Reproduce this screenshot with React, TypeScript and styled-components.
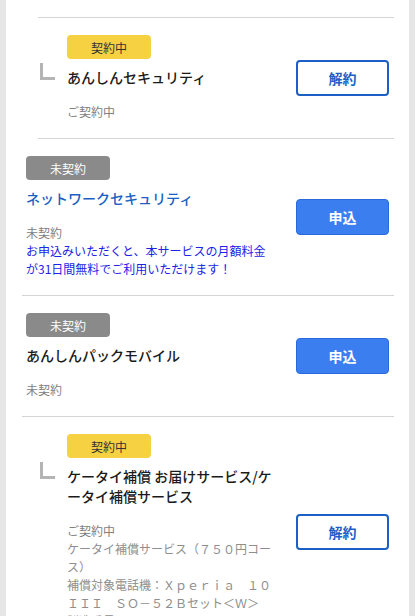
import React from "react";
import styled, {createGlobalStyle} from "styled-components";

const GlobalStyle = createGlobalStyle`
  body {
    margin: 0;
    background: #e6e6e6;
    font-family: "Noto Sans CJK JP", "Noto Sans", sans-serif;
    color: #222;
  }
`

const Page = styled.div`
  padding: 0 6px;
  height: 616px;
  overflow: hidden;
`

const Card = styled.div`
  background: #fff;
  padding: 0 15px 0 16px;
  min-height: 616px;
`

const TopEdge = styled.div`
  height: 17px;
  margin-left: 16px;
  border-bottom: 1px solid #d4d4d4;
`

const Row = styled.div<{ $indent: boolean }>`
  display: flex;
  align-items: center;
  margin-left: ${({$indent}) => $indent ? "16px" : "0"};
  padding: 17px 5px 17px ${({$indent}) => $indent ? "29px" : "4px"};
  border-bottom: 1px solid #d4d4d4;
`

const Body = styled.div`
  flex: 1;
  min-width: 0;
  margin-right: 21px;
`

const Badge = styled.div<{ $active: boolean }>`
  width: 84px;
  height: 24px;
  border-radius: 4px;
  display: flex;
  align-items: center;
  justify-content: center;
  font-size: 12px;
  background: ${({$active}) => $active ? "#f6d243" : "#8a8a8a"};
  color: ${({$active}) => $active ? "#333" : "#fff"};
`

const TitleLine = styled.div`
  display: flex;
  align-items: flex-start;
  margin-top: 8px;
`

const Corner = styled.span`
  flex: none;
  width: 12px;
  height: 14px;
  margin: -4px 12px 0 -27px;
  border-left: 3px solid #b4b4b4;
  border-bottom: 3px solid #b4b4b4;
`

const Title = styled.div<{ $link: boolean }>`
  font-size: 14px;
  line-height: 20px;
  font-weight: 500;
  color: ${({$link}) => $link ? "#1a5fc4" : "#1a1a1a"};
`

const Status = styled.div`
  margin-top: 16px;
  font-size: 12px;
  line-height: 18px;
  color: #808080;
`

const Detail = styled.div`
  font-size: 12px;
  line-height: 18px;
  color: #8e8e8e;
`

const Notice = styled.div`
  font-size: 12px;
  line-height: 18px;
  color: #1c22e6;
`

const ActionButton = styled.button<{ $primary: boolean }>`
  flex: none;
  width: 93px;
  height: 36px;
  box-sizing: border-box;
  border-radius: 4px;
  font-family: inherit;
  font-size: 14px;
  font-weight: 700;
  cursor: pointer;
  border: ${({$primary}) => $primary ? "1px solid #2a69dc" : "2px solid #1d5fc6"};
  background: ${({$primary}) => $primary ? "#3a7ef0" : "#fff"};
  color: ${({$primary}) => $primary ? "#fff" : "#1d5fc6"};
`

type Service = {
    title: string
    active: boolean
    indent: boolean
    link?: boolean
    status: string
    details?: string[]
    notice?: string[]
}

const services: Service[] = [
    {title: "あんしんセキュリティ", active: true, indent: true, status: "ご契約中"},
    {
        title: "ネットワークセキュリティ", active: false, indent: false, link: true, status: "未契約",
        notice: ["お申込みいただくと、本サービスの月額料金が31日間無料でご利用いただけます！"],
    },
    {title: "あんしんパックモバイル", active: false, indent: false, status: "未契約"},
    {
        title: "ケータイ補償 お届けサービス/ケータイ補償サービス", active: true, indent: true, status: "ご契約中",
        details: [
            "ケータイ補償サービス（７５０円コース）",
            "補償対象電話機：Ｘｐｅｒｉａ　１０　ＩＩＩ　ＳＯ－５２Ｂセット＜Ｗ＞",
            "製造番号：３５１２３４５６７８９",
        ],
    },
]

function ServiceRow(props: { service: Service }) {
    const {service} = props;
    return (
        <Row $indent={service.indent}>
            <Body>
                <Badge $active={service.active}>{service.active ? "契約中" : "未契約"}</Badge>
                <TitleLine>
                    {service.indent && <Corner/>}
                    <Title $link={!!service.link}>{service.title}</Title>
                </TitleLine>
                <Status>{service.status}</Status>
                {service.notice && service.notice.map(n => <Notice key={n}>{n}</Notice>)}
                {service.details && service.details.map(d => <Detail key={d}>{d}</Detail>)}
            </Body>
            <ActionButton $primary={!service.active}>{service.active ? "解約" : "申込"}</ActionButton>
        </Row>
    );
}

export default function App() {
    return (
        <>
            <GlobalStyle/>
            <Page>
                <Card>
                    <TopEdge/>
                    {services.map(s => <ServiceRow key={s.title} service={s}/>)}
                </Card>
            </Page>
        </>
    );
}
